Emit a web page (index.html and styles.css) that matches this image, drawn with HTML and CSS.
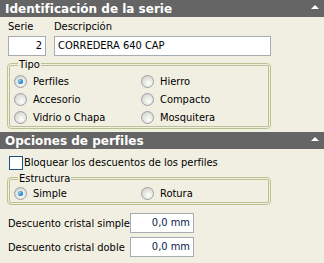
FILE: index.html
```html
<!DOCTYPE html>
<html lang="es">
<head>
    <meta charset="UTF-8">
    <title>Serie</title>
    <link rel="stylesheet" href="styles.css">
</head>
<body>
    <div class="panel">
        <div class="section-header">
            <span>Identificación de la serie</span>
            <span class="caret"></span>
        </div>

        <div class="serie-row">
            <div class="field">
                <label>Serie</label>
                <div class="input input-serie">2</div>
            </div>
            <div class="field">
                <label>Descripción</label>
                <div class="input input-desc">CORREDERA 640 CAP</div>
            </div>
        </div>

        <fieldset class="group group-tipo">
            <legend>Tipo</legend>
            <div class="options">
                <div class="option"><span class="radio checked"></span>Perfiles</div>
                <div class="option"><span class="radio"></span>Hierro</div>
                <div class="option"><span class="radio"></span>Accesorio</div>
                <div class="option"><span class="radio"></span>Compacto</div>
                <div class="option"><span class="radio"></span>Vidrio o Chapa</div>
                <div class="option"><span class="radio"></span>Mosquitera</div>
            </div>
        </fieldset>

        <div class="section-header">
            <span>Opciones de perfiles</span>
            <span class="caret"></span>
        </div>

        <div class="check-row">
            <span class="checkbox"></span>Bloquear los descuentos de los perfiles
        </div>

        <fieldset class="group group-estructura">
            <legend>Estructura</legend>
            <div class="options">
                <div class="option"><span class="radio checked"></span>Simple</div>
                <div class="option"><span class="radio"></span>Rotura</div>
            </div>
        </fieldset>

        <div class="values">
            <div class="value-row">
                <label>Descuento cristal simple</label>
                <div class="input input-mm">0,0 mm</div>
            </div>
            <div class="value-row">
                <label>Descuento cristal doble</label>
                <div class="input input-mm">0,0 mm</div>
            </div>
        </div>
    </div>
</body>
</html>
```

FILE: styles.css
```css
:root {
    --panel-bg: #f1efe2;
    --header-bg: #656565;
    --input-border: #a5acb2;
    --group-border: #b7c492;
}

* {
    margin: 0;
    padding: 0;
    box-sizing: border-box;
}

body {
    background: var(--panel-bg);
    font-family: "DejaVu Sans Condensed", "DejaVu Sans", Verdana, sans-serif;
    font-size: 11px;
    color: #000;
}

.panel {
    width: 324px;
    height: 263px;
    overflow: hidden;
    white-space: nowrap;
}

/* Cabeceras de seccion */
.section-header {
    height: 17px;
    background: var(--header-bg);
    color: #fff;
    font-family: "DejaVu Sans", Verdana, sans-serif;
    font-weight: bold;
    font-size: 12px;
    display: flex;
    align-items: center;
    justify-content: space-between;
    padding: 0 5px 0 5px;
}

.caret {
    width: 0;
    height: 0;
    border-left: 4px solid transparent;
    border-right: 4px solid transparent;
    border-bottom: 4px solid #fff;
    margin-bottom: 3px;
}

/* Fila serie / descripcion */
.serie-row {
    display: flex;
    gap: 8px;
    padding: 3px 0 0 8px;
}

.field {
    display: flex;
    flex-direction: column;
    gap: 2px;
}

.field label {
    height: 14px;
    line-height: 14px;
}

.input {
    height: 20px;
    background: #fff;
    border: 1px solid var(--input-border);
    padding: 0 3px;
    line-height: 18px;
}

.input-serie {
    width: 38px;
    text-align: right;
}

.input-desc {
    width: 217px;
}

/* Grupos */
.group {
    width: 264px;
    margin-left: 7px;
    border: 3px double var(--group-border);
    border-radius: 4px;
    padding: 0 0 0 4px;
}

.group legend {
    margin-left: 4px;
    padding: 0 1px;
    line-height: 13px;
}

.group-tipo {
    margin-top: 2px;
    margin-bottom: 3px;
}

.group-tipo .options {
    padding-top: 1px;
}

.options {
    display: grid;
    grid-template-columns: 127px 1fr;
}

.option {
    height: 18px;
    display: flex;
    align-items: center;
    gap: 6px;
}

.radio {
    width: 13px;
    height: 13px;
    border-radius: 50%;
    border: 1px solid #9aa0a6;
    background: radial-gradient(circle at 60% 65%, #fdfdfb 0%, #e8e8e2 45%, #c9c9c2 100%);
    position: relative;
    flex-shrink: 0;
}

.radio.checked::after {
    content: '';
    position: absolute;
    left: 3px;
    top: 3px;
    width: 5px;
    height: 5px;
    border-radius: 50%;
    background: radial-gradient(circle at 35% 35%, #8fd0f5 0%, #2b8ad0 55%, #0b4f93 100%);
}

/* Casilla */
.check-row {
    display: flex;
    align-items: center;
    gap: 1px;
    padding: 5px 0 0 9px;
    height: 22px;
}

.checkbox {
    width: 14px;
    height: 14px;
    background: #fff;
    border: 1px solid #1c5180;
}

.group-estructura {
    margin-top: 1px;
}

.group-estructura .option {
    height: 17px;
}

/* Descuentos */
.values {
    display: flex;
    flex-direction: column;
    gap: 4px;
    padding: 8px 0 0 8px;
}

.value-row {
    display: flex;
    align-items: center;
}

.value-row label {
    width: 122px;
}

.input-mm {
    width: 64px;
    text-align: right;
    color: #0b1a50;
}
```
